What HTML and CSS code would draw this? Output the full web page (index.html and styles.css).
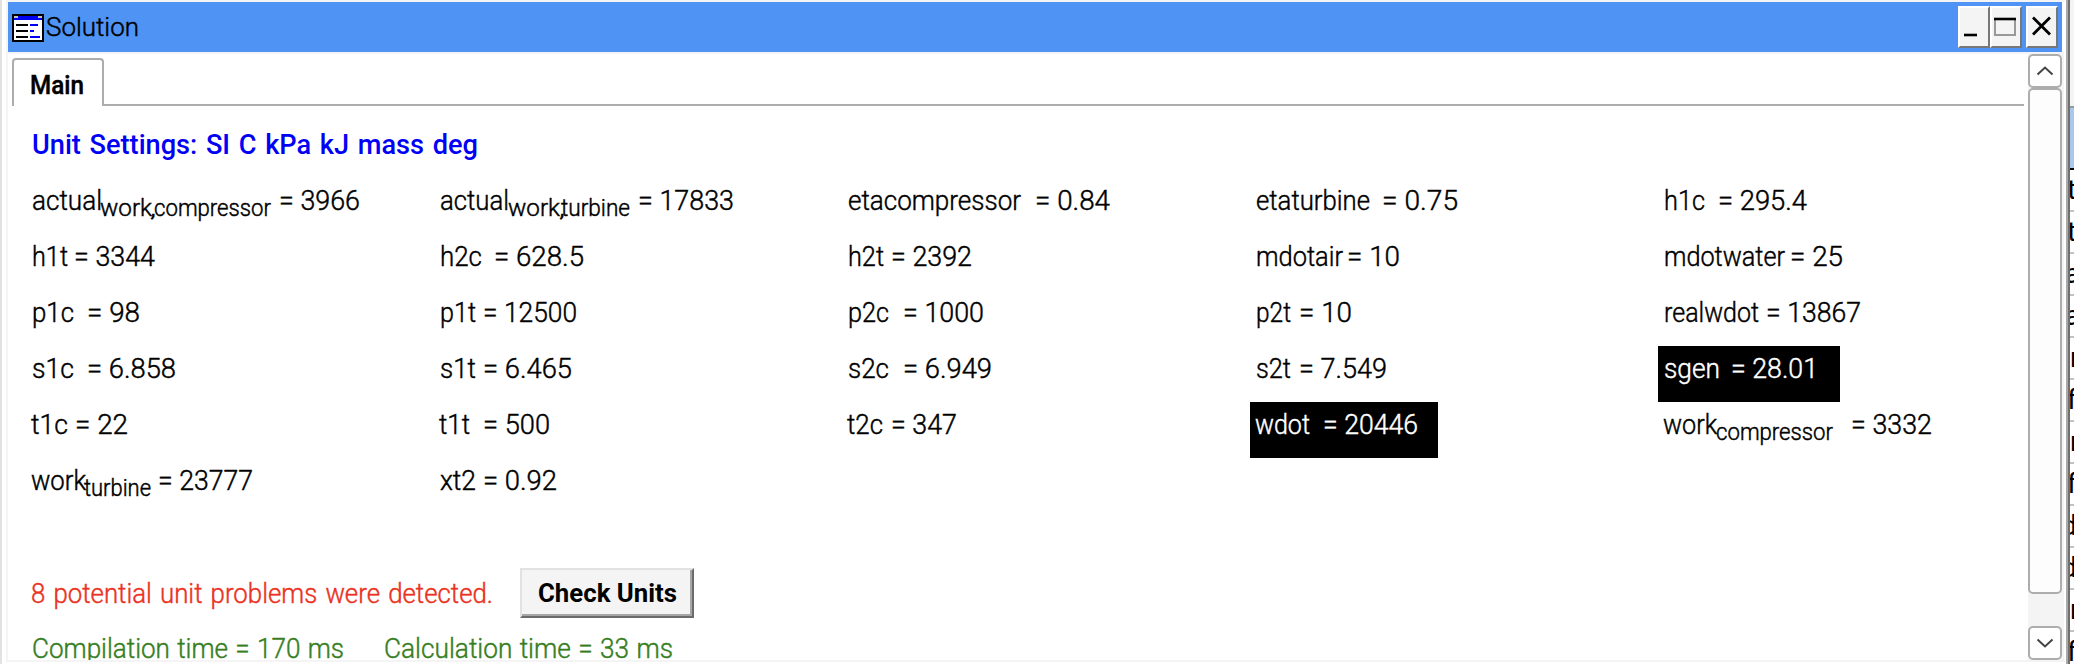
FILE: index.html
```
<!DOCTYPE html>
<html lang="en">
<head>
<meta charset="utf-8">
<title>Solution</title>
<link rel="stylesheet" href="styles.css">
</head>
<body>
<div class="desktop">
  <div class="window">
    <header class="titlebar">
      <svg class="app-icon" width="32" height="28" viewBox="0 0 32 28" shape-rendering="crispEdges">
        <path fill="#000" d="M0 0h32v28H0z"/><path fill="#fff" d="M2 6h28v20H2z"/><path fill="#0000f5" d="M2 2h28v4H2z"/>
        <path fill="#c0c0c0" d="M2 2h4v2H2zM26 2h4v2h-4z"/>
        <path fill="#000" d="M4 10h12v2H4zM4 16h12v2H4zM4 22h12v2H4z"/><path fill="#0000f5" d="M18 10h8v2h-8zM18 16h4v2h-4zM18 22h10v2H18z"/>
      </svg>
      <span class="title"><span class="run" data-w="93">Solution</span></span>
      <div class="controls">
        <button class="ctl"><svg width="30" height="38" viewBox="0 0 30 38"><path d="M4 27h13" stroke="#000" stroke-width="2.6"/></svg></button>
        <button class="ctl"><svg width="30" height="38" viewBox="0 0 30 38"><path d="M3 12v15h20V12" fill="none" stroke="#999" stroke-width="2"/><path d="M2 11h22" stroke="#000" stroke-width="2.6"/></svg></button>
        <button class="ctl close"><svg width="30" height="38" viewBox="0 0 30 38"><path d="M5 9.500l17 17M22 9.500L5 26.500" stroke="#000" stroke-width="2.800"/></svg></button>
      </div>
    </header>
    <div class="body">
      <main class="main">
        <nav class="tabs"><div class="tab"><span class="run" data-w="54">Main</span></div><div class="tab-line"></div></nav>
        <h1 class="units"><span class="run" data-w="446">Unit Settings: SI C kPa kJ mass deg</span></h1>
        <section class="grid" id="grid"></section>
        <div class="message">
          <span class="warn"><span class="run" data-w="462">8 potential unit problems were detected.</span></span>
          <button class="check"><span class="run" data-w="139">Check Units</span></button>
        </div>
        <div class="timing"><span class="run" data-w="312">Compilation time = 170 ms</span><span class="run" data-w="289">Calculation time = 33 ms</span></div>
      </main>
      <aside class="scroll">
        <div class="arrow"><svg width="30" height="30" viewBox="0 0 30 30"><path d="M7.500 18.500L15 11.500l7.500 7" fill="none" stroke="#444" stroke-width="2"/></svg></div>
        <div class="thumb"></div>
        <div class="arrow down"><svg width="30" height="30" viewBox="0 0 30 30"><path d="M7.500 11.500L15 18.500l7.500-7" fill="none" stroke="#444" stroke-width="2"/></svg></div>
      </aside>
    </div>
  </div>
  <div class="edge"></div>
  <div class="behind">
    <div class="behind-top"></div><div class="behind-head"></div>
    <div class="line"><span>t</span></div><div class="line"><span>t</span></div><div class="line wide"><span>a</span></div><div class="line wide"><span>a</span></div><div class="line in"><span>r</span></div><div class="line"><span>f</span></div><div class="line in"><span>r</span></div><div class="line"><span>f</span></div><div class="line stem"><span>d</span></div><div class="line stem"><span>d</span></div><div class="line in"><span>r</span></div><div class="line"><span>f</span></div>
  </div>
</div>
<script src="app.js"></script>
</body>
</html>
```
FILE: app.js
```
// Each run is [text, start, end] measured inside its cell; a fourth entry marks a subscript.
const cells = [
  [['actual',7,75],['work',75,125,1],[',',125,129,1],['compressor',129,244,1],['= 3966',254,333]],
  [['actual',7,74],['work',75,125,1],[',',126,130,1],['turbine',128,195,1],['= 17833',205,299]],
  [['etacompressor',7,178],['= 0.84',194,267]],
  [['etaturbine',7,119],['= 0.75',133,207]],
  [['h1c',7,46],['= 295.4',61,148]],
  [['h1t',7,41],['= 3344',49,128]],
  [['h2c',7,47],['= 628.5',61,149]],
  [['h2t',7,41],['= 2392',50,129]],
  [['mdotair',7,92],['= 10',98,149]],
  [['mdotwater',7,126],['= 25',133,184]],
  [['p1c',7,47],['= 98',62,113]],
  [['p1t',7,41],['= 12500',50,142]],
  [['p2c',7,46],['= 1000',62,141]],
  [['p2t',7,40],['= 10',50,101]],
  [['realwdot',7,100],['= 13867',109,202]],
  [['s1c',7,47],['= 6.858',62,149]],
  [['s1t',7,41],['= 6.465',50,137]],
  [['s2c',7,46],['= 6.949',62,149]],
  [['s2t',7,40],['= 7.549',50,136]],
  [['sgen',7,61],['= 28.01',74,159],182],
  [['t1c',6,41],['= 22',50,101]],
  [['t1t',6,35],['= 500',50,115]],
  [['t2c',6,40],['= 347',50,114]],
  [['wdot',6,59],['= 20446',74,167],188],
  [['work',6,58],['compressor',59,174,1],['= 3332',194,273]],
  [['work',6,59],['turbine',59,124,1],['= 23777',133,226]],
  [['xt2',7,41],['= 0.92',50,122]]
];

const grid = document.getElementById('grid');
for (const runs of cells) {
  const cell = document.createElement('div');
  cell.className = 'cell';
  const inner = document.createElement('div');
  inner.className = 'value';
  let pen = 0;
  for (const run of runs) {
    if (typeof run === 'number') {
      inner.classList.add('selected');
      inner.style.width = run + 'px';
      continue;
    }
    const span = document.createElement('span');
    span.className = run[3] ? 'run sub' : 'run';
    span.textContent = run[0];
    span.dataset.w = run[2] - run[1] + 2;
    span.style.marginLeft = run[1] - 1 - pen + 'px';
    pen = run[2] + 1;
    inner.append(span);
  }
  cell.append(inner);
  grid.append(cell);
}

// Condense every run to its set width.
for (const run of document.querySelectorAll('.run')) {
  const width = Number(run.dataset.w);
  const natural = run.getBoundingClientRect().width;
  run.style.width = width + 'px';
  run.style.transform = 'scaleX(' + width / natural + ')';
}
```
FILE: styles.css
```
* { box-sizing: border-box; }
body { margin: 0; background: #fff; color: #000; font: 300 28px/32px Roboto, "Liberation Sans", sans-serif; overflow: hidden; }
button { font: inherit; color: inherit; padding: 0; border-radius: 0; }
svg { display: block; }

.desktop { display: flex; height: 664px; border-left: 2px solid #e2e2e2; }
.window { flex: none; width: 2060px; height: 662px; margin-left: 4px; border: 2px solid #f4f4f4; border-right-color: #fff; display: flex; flex-direction: column; }
.run { display: inline-block; flex: none; white-space: pre; transform-origin: 0 50%; -webkit-text-stroke: .45px currentColor; }

.titlebar { flex: none; display: flex; align-items: flex-start; height: 50px; width: 2054px; padding: 4px 4px 0; background: #4f94f4; }
.app-icon { margin-top: 8px; }
.title { flex: 1; margin-left: 2px; font-size: 25.5px; padding-top: 5px; line-height: 32px; }
.controls { display: flex; }
.ctl { width: 32px; height: 42px; overflow: hidden; background: #f4f4f4; border: 2px solid #fff; border-right-color: #777; border-bottom-color: #777; }
.close { margin-left: 4px; }

.body { flex: 1; min-height: 0; display: flex; border-top: 2px solid #f4f4f4; }
.main { flex: 1; min-width: 0; overflow: hidden; }
.tabs { display: flex; height: 52px; padding: 4px 0 0 4px; }
.tab { width: 92px; height: 48px; border: 2px solid #adadad; border-bottom: 0; border-radius: 4px 4px 0 0; padding: 9px 0 0 16px; font-size: 25.5px; font-weight: 500; line-height: 32px; }
.tab-line { flex: 1; margin-right: 4px; border-bottom: 2px solid #adadad; }
.units { margin: 23px 0 0 24px; height: 49px; font-size: 28px; font-weight: 500; line-height: 32px; color: #0000f5; word-spacing: 2px; }
.units .run { -webkit-text-stroke: 0; }

.grid { display: grid; grid-template-columns: repeat(5, 408px); grid-auto-rows: 56px; margin-left: 18px; width: 2040px; }
.value { display: flex; height: 56px; padding-top: 7px; line-height: 32px; }
.selected { background: #000; color: #fff; }
.sub { font-size: 23px; padding-top: 8px; height: 40px; }

.message { display: flex; height: 56px; margin: 54px 0 0 23px; }
.warn { width: 489px; padding-top: 10px; color: #ea3323; word-spacing: 2px; }
.check { width: 174px; height: 50px; background: #f4f4f4; border: 2px solid #e2e2e2; border-right-color: #6b6b6b; border-bottom-color: #6b6b6b; box-shadow: inset -2px -2px #a6a6a6; font-weight: 700; text-align: left; padding-left: 16px; font-size: 26px; }
.check .run { -webkit-text-stroke: 0; }
.timing { display: flex; gap: 40px; padding: 9px 0 0 24px; color: #377e22; word-spacing: 1px; }

.scroll { width: 36px; padding-right: 2px; background: #f4f4f4; display: flex; flex-direction: column; }
.arrow, .thumb { flex: none; background: #fff; border: 2px solid #adadad; border-radius: 5px; }
.arrow { height: 34px; }
.thumb { height: 506px; background: #fdfdfd; }
.down { margin-top: 32px; }

.edge { flex: none; width: 4px; background: #707070; border-left: 2px solid #aaa; }
.behind { width: 4px; overflow: hidden; font-size: 28px; font-weight: 400; }
.behind-top { height: 108px; background: #f4f4f4; border-bottom: 2px solid #999; }
.behind-head { height: 62px; background: #aac8eb; border-bottom: 2px solid #000; }
.line { height: 42px; overflow: hidden; border-bottom: 2px solid #c0c0c0; padding-top: 4px; white-space: nowrap; }
.line span { display: inline-block; margin-left: -3px; }
.line.wide span { margin-left: -5px; }
.line.stem span { margin-left: -9px; }
.line.in span { margin-left: 0; }
```
